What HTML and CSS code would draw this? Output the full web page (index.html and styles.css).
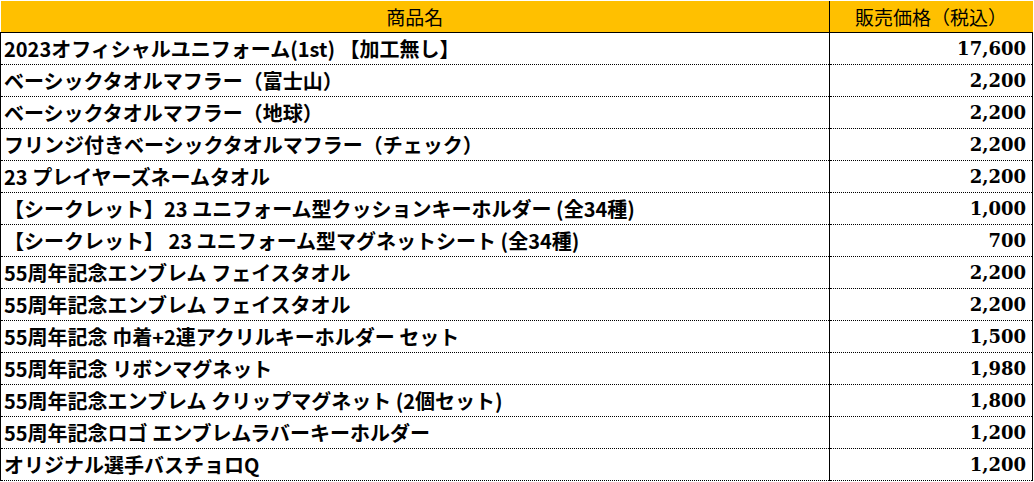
FILE: index.html
```html
<!DOCTYPE html>
<html lang="ja">
<head>
<meta charset="utf-8">
<title>商品一覧</title>
<link rel="stylesheet" href="styles.css">
</head>
<body>
<table class="price-table">
  <colgroup>
    <col class="col-name">
    <col class="col-price">
  </colgroup>
  <thead>
    <tr>
      <th class="head">商品名</th>
      <th class="head">販売価格（税込）</th>
    </tr>
  </thead>
  <tbody>
    <tr><td class="name">2023オフィシャルユニフォーム(1st) 【加工無し】</td><td class="price">17,600</td></tr>
    <tr><td class="name">ベーシックタオルマフラー（富士山）</td><td class="price">2,200</td></tr>
    <tr><td class="name">ベーシックタオルマフラー（地球）</td><td class="price">2,200</td></tr>
    <tr><td class="name">フリンジ付きベーシックタオルマフラー（チェック）</td><td class="price">2,200</td></tr>
    <tr><td class="name">23 プレイヤーズネームタオル</td><td class="price">2,200</td></tr>
    <tr><td class="name">【シークレット】23 ユニフォーム型クッションキーホルダー (全34種)</td><td class="price">1,000</td></tr>
    <tr><td class="name">【シークレット】 23 ユニフォーム型マグネットシート (全34種)</td><td class="price">700</td></tr>
    <tr><td class="name">55周年記念エンブレム フェイスタオル</td><td class="price">2,200</td></tr>
    <tr><td class="name">55周年記念エンブレム フェイスタオル</td><td class="price">2,200</td></tr>
    <tr><td class="name">55周年記念 巾着+2連アクリルキーホルダー セット</td><td class="price">1,500</td></tr>
    <tr><td class="name">55周年記念 リボンマグネット</td><td class="price">1,980</td></tr>
    <tr><td class="name">55周年記念エンブレム クリップマグネット (2個セット)</td><td class="price">1,800</td></tr>
    <tr><td class="name">55周年記念ロゴ エンブレムラバーキーホルダー</td><td class="price">1,200</td></tr>
    <tr><td class="name">オリジナル選手バスチョロQ</td><td class="price">1,200</td></tr>
  </tbody>
</table>
</body>
</html>
```
FILE: styles.css
```css
html, body {
  margin: 0;
  padding: 0;
  background: #ffffff;
}

body {
  padding-top: 1px;
  font-family: "Noto Sans CJK JP", "Noto Sans", sans-serif;
  color: #000000;
}

.price-table {
  width: 1032px;
  border-collapse: collapse;
  table-layout: fixed;
}

.col-name {
  width: 829px;
}

.col-price {
  width: 203px;
}

.head {
  height: 31px;
  padding: 0;
  background: #ffc000;
  font-weight: 400;
  font-size: 19px;
  line-height: 31px;
  text-align: center;
  border-bottom: 1px solid #000000;
  border-right: 1px solid #000000;
}

.head:last-child {
  border-right: 1px solid #ffc000;
}

.price-table td {
  height: 31px;
  padding: 0;
  line-height: 31px;
  border-bottom: 1px dotted #000000;
  white-space: nowrap;
  overflow: hidden;
}

.name {
  padding-left: 3px !important;
  font-size: 20px;
  font-weight: 700;
  border-left: 1px solid #000000;
  border-right: 1px solid #000000;
}

.price {
  padding-right: 6px !important;
  text-align: right;
  font-family: "DejaVu Serif", "Liberation Serif", serif;
  font-size: 18px;
  font-weight: 700;
  border-right: 1px solid #000000;
}
```
